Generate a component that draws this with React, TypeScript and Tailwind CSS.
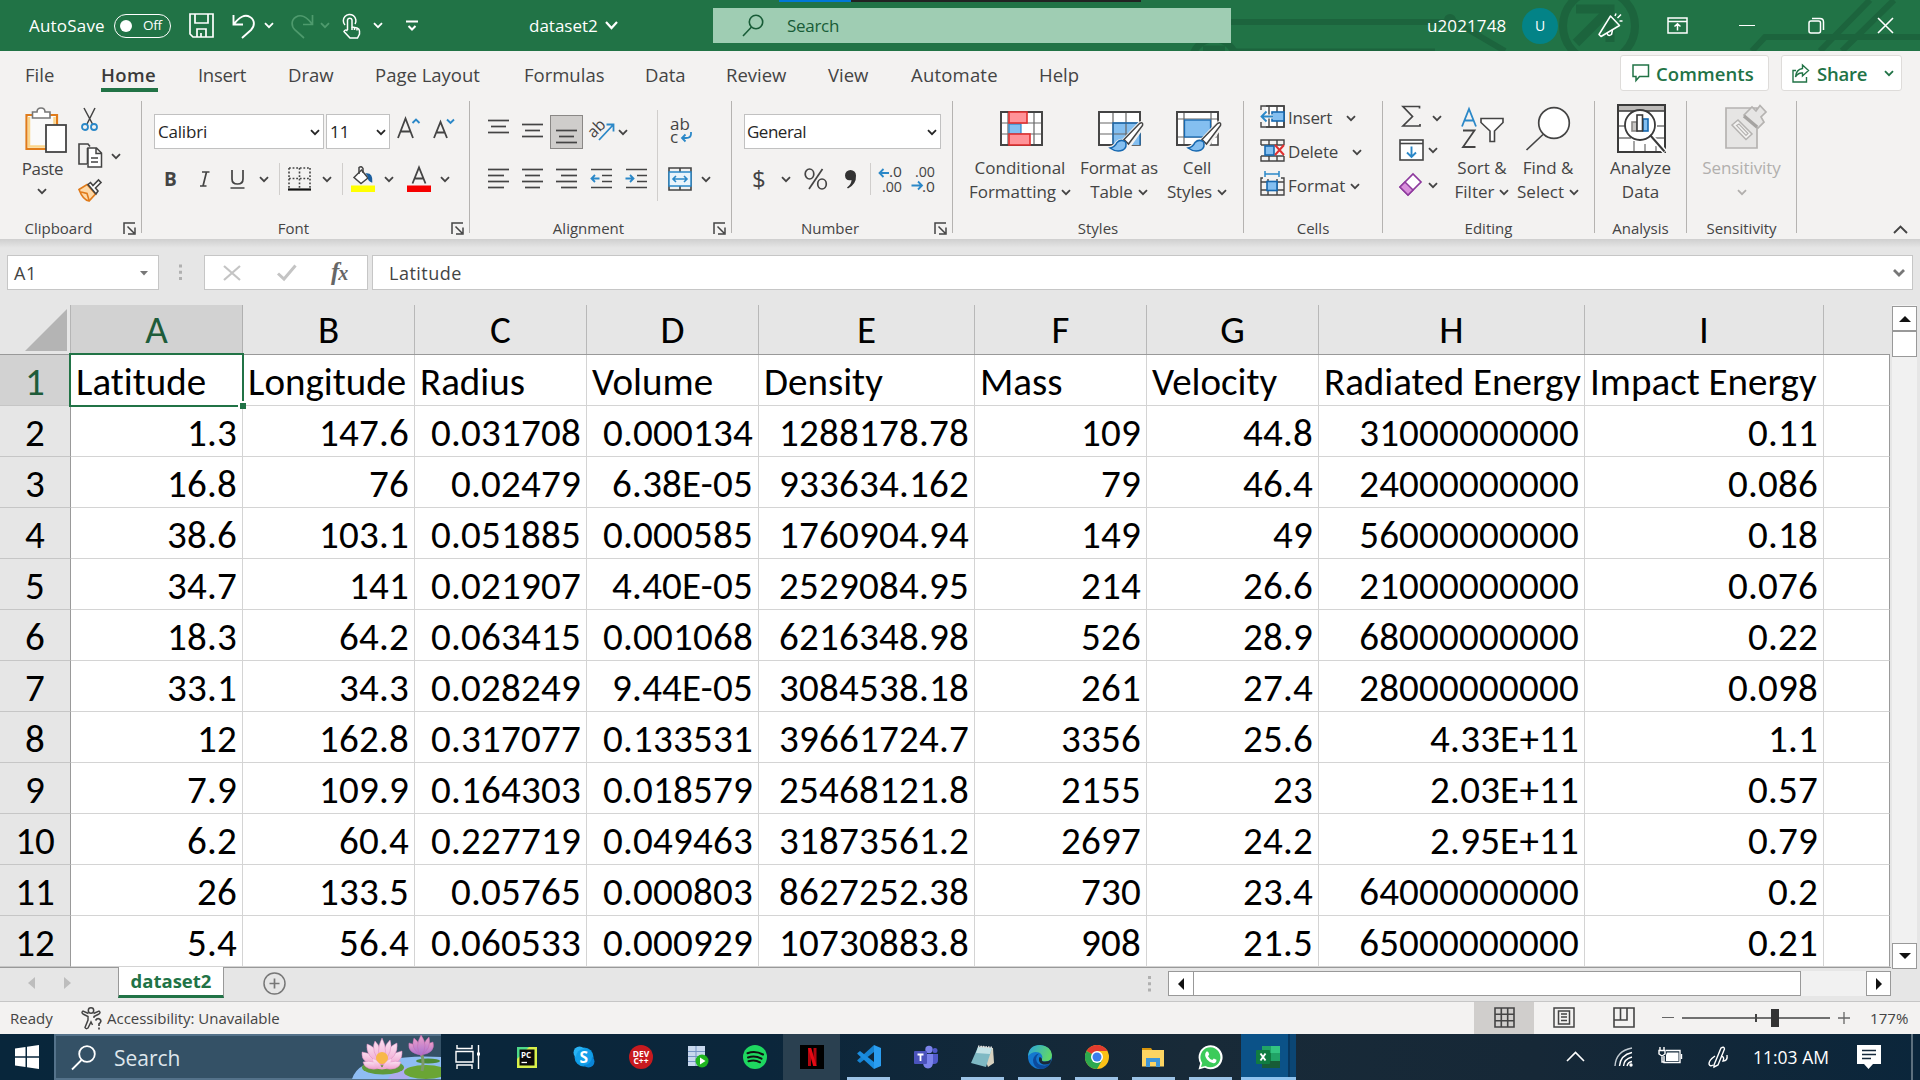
import type { ReactNode } from "react";

function Svg({ w, h, cls = "", children }: { w: number; h: number; cls?: string; children: ReactNode }) {
  return (
    <svg width={w} height={h} viewBox={`0 0 ${w} ${h}`} fill="none" stroke="#444" strokeWidth={1.6} className={"shrink-0 overflow-visible " + cls}>
      {children}
    </svg>
  );
}

function Chev({ cls = "" }: { cls?: string }) {
  return (
    <Svg w={10} h={7} cls={cls}>
      <path d="M1 1.2L5 5.2L9 1.2" stroke="currentColor" strokeWidth={1.8} />
    </Svg>
  );
}

/* ---------- title bar ---------- */

function TitleBar() {
  return (
    <div className="relative flex h-[51px] items-center overflow-hidden bg-[#217346] text-[17px] text-white">
      <svg width="690" height="51" viewBox="0 0 690 51" fill="none" stroke="#1c643d" className="absolute top-0 right-0">
        <path d="M0 22H222" strokeWidth="6" />
        <path d="M0 50H205" strokeWidth="3" />
        <circle cx="220" cy="20" r="6" fill="#1c643d" stroke="none" />
        <path d="M222 20L275 51" strokeWidth="6" />
        <circle cx="369" cy="26" r="36" strokeWidth="8" />
        <path d="M346 9H380V42" strokeWidth="9" />
        <path d="M380 9L346 43" strokeWidth="9" />
        <path d="M640 0L590 51M664 0L612 51" strokeWidth="6" />
        <path d="M690 37H535L522 51" strokeWidth="6" />
      </svg>
      <svg width="60" height="16" viewBox="0 0 60 16" fill="none" stroke="#1c643d" strokeWidth="7" className="absolute top-[35px] left-[1185px]">
        <circle cx="29" cy="26" r="22" />
        <path d="M18 14H40" />
      </svg>
      <div className="absolute top-0 left-[779px] flex h-[2px] w-[362px] bg-[#222]">
        <div className="w-[72px] bg-[#0078d7]" />
      </div>

      <div className="relative flex items-center">
        <span className="ml-[29px] w-[77px] text-[17px] tracking-[0.2px]">AutoSave</span>
        <div className="ml-[8px] flex h-6 w-[57px] items-center rounded-full border-[1.5px] border-white">
          <span className="ml-[5px] h-3 w-3 rounded-full bg-white" />
          <span className="ml-[11px] text-[13.5px] leading-none tracking-[-0.3px]">Off</span>
        </div>
        <Svg w={25} h={25} cls="ml-[18px]">
          <g stroke="#fff" strokeWidth={1.7}>
            <path d="M1 1H24V24H4L1 21Z" />
            <path d="M6 1V10H19V1M8 24V16H17V24M12 20V24" />
          </g>
        </Svg>
        <Svg w={24} h={26} cls="ml-[18px]">
          <path d="M1.5 2V11.5H11M2 11C7 4 13 1 18 4C23 7 23 13 19 17L10 25" stroke="#fff" strokeWidth={1.9} />
        </Svg>
        <Chev cls="ml-[8px]" />
        <Svg w={24} h={26} cls="ml-[16px]">
          <path d="M22.5 2V11.5H13M22 11C17 4 11 1 6 4C1 7 1 13 5 17L14 25" stroke="#4e9a6d" strokeWidth={1.7} />
        </Svg>
        <Chev cls="ml-[6px] text-[#4e9a6d]" />
        <Svg w={19} h={26} cls="ml-[12px]">
          <g stroke="#fff" strokeWidth={1.5}>
            <path d="M3 12A6.3 6.3 0 1 1 13 11" />
            <path d="M5.5 17V7A2.3 2.3 0 0 1 10 7V14L15 15Q17.500 16 17.500 18V21L15.500 25H8L2 18.500Q3 16 5.500 18" />
            <path d="M10 14V17M12.500 14.500V17M15 15.500V17.500" />
          </g>
        </Svg>
        <Chev cls="ml-[12px]" />
        <Svg w={12} h={12} cls="ml-[23px]">
          <path d="M0 1.500H12M2.500 6L6 9.500L9.500 6" stroke="#fff" strokeWidth={2} />
        </Svg>
        <span className="ml-[111px] w-[70px]">dataset2</span>
        <Svg w={13} h={9} cls="ml-[6px]">
          <path d="M1 1L6.500 7L12 1" stroke="#fff" strokeWidth={2.200} />
        </Svg>
      </div>

      <div className="relative ml-[95px] flex h-[35px] w-[518px] items-center bg-[#9fcdb3] text-[#185c37]">
        <Svg w={22} h={23} cls="ml-[29px]">
          <g stroke="#185c37" strokeWidth={1.600}>
            <circle cx="14" cy="8" r="6.700" />
            <path d="M9.500 13L1 22" />
          </g>
        </Svg>
        <span className="ml-[23px] tracking-[-0.3px]">Search</span>
      </div>

      <div className="relative ml-[196px] flex items-center">
        <span className="w-[80px] tracking-[0.1px]">u2021748</span>
        <span className="ml-[15px] flex h-[36px] w-[36px] items-center justify-center rounded-full bg-[#038387] text-[14px]">U</span>
        <Svg w={25} h={25} cls="ml-[40px]">
          <g stroke="#fff" strokeWidth={1.500}>
            <path d="M12.500 3L21.500 12.500L3 23.500L1 21.500Z" strokeLinejoin="round" />
            <path d="M9 20Q10 24 13.500 21.500L14.500 17M17 3L18 0.500M19.500 5L23 1.500M21.500 8H24.500" />
          </g>
        </Svg>
        <Svg w={21} h={17} cls="ml-[44px]">
          <g stroke="#fff" strokeWidth={1.500}>
            <path d="M1 1H20V16H1ZM1 4.500H20M10.500 13.500V7M7.500 9.500L10.500 6.800L13.500 9.500" />
          </g>
        </Svg>
        <div className="ml-[51px] h-[1.5px] w-[16px] bg-white" />
        <Svg w={17} h={17} cls="ml-[53px]">
          <g stroke="#fff" strokeWidth={1.500}>
            <rect x="1" y="4" width="11.500" height="12" rx="2" />
            <path d="M4 1.500H12Q15.500 1.500 15.500 5V13" />
          </g>
        </Svg>
        <Svg w={17} h={17} cls="ml-[52px]">
          <path d="M1 1L16 16M16 1L1 16" stroke="#fff" strokeWidth={1.600} />
        </Svg>
      </div>
    </div>
  );
}

/* ---------- ribbon tabs ---------- */

function Tabs() {
  return (
    <div className="flex h-[50px] items-start text-[18.5px] text-[#444]">
      <nav className="flex h-[48px] items-center whitespace-nowrap">
        <span className="ml-[25px] w-[76px]">File</span>
        <span className="relative flex h-full w-[97px] items-center font-semibold tracking-[0.4px] text-[#3a3a3a]">
          Home
          <i className="absolute top-[37px] left-0 h-[4px] w-[57px] bg-[#217346]" />
        </span>
        <span className="w-[90px] tracking-[-0.3px]">Insert</span>
        <span className="w-[87px]">Draw</span>
        <span className="w-[149px]">Page Layout</span>
        <span className="w-[121px]">Formulas</span>
        <span className="w-[81px]">Data</span>
        <span className="w-[102px]">Review</span>
        <span className="w-[83px]">View</span>
        <span className="w-[128px] tracking-[0.2px]">Automate</span>
        <span className="w-[41px]">Help</span>
      </nav>
      <div className="mt-[4px] mr-[18px] ml-auto flex gap-[12px] font-semibold text-[#217346]">
        <div className="flex h-[36px] w-[149px] items-center rounded-[3px] border border-[#dedcda] bg-white">
          <Svg w={18} h={18} cls="ml-[11px]">
            <path d="M1 1H16.500V12.500H7.500L4 16.500V12.500H1Z" stroke="#217346" strokeWidth={1.500} />
          </Svg>
          <span className="mt-px ml-[6px] tracking-[0.1px]">Comments</span>
        </div>
        <div className="flex h-[36px] w-[121px] items-center rounded-[3px] border border-[#dedcda] bg-white">
          <Svg w={18} h={19} cls="ml-[10px]">
            <g stroke="#217346" strokeWidth={1.400}>
              <path d="M4 6.500H1V18H14.500V13" />
              <path d="M10.500 1L16.500 6.500L10.500 12V9Q6 8.500 3.500 13Q4 5.500 10.500 4.500Z" />
            </g>
          </Svg>
          <span className="mt-px ml-[7px] tracking-[-0.2px]">Share</span>
          <Chev cls="ml-[17px]" />
        </div>
      </div>
    </div>
  );
}

/* ---------- ribbon ---------- */

function Launcher() {
  return (
    <Svg w={14} h={13} cls="mt-[10px] mr-[4px] ml-[6px]">
      <path d="M1 12V1H12M4.500 4.500L11 11M12 5.500V12H5" strokeWidth={1.500} />
    </Svg>
  );
}

function Group({ w, label, launcher = false, children }: { w: string; label: string; launcher?: boolean; children: ReactNode }) {
  return (
    <div className={"flex h-[132px] shrink-0 flex-col border-r border-[#b5b3b1] " + w}>
      <div className="flex h-[111px] shrink-0 items-start whitespace-nowrap">{children}</div>
      <div className="flex h-[27px] shrink-0 items-start">
        <span className="flex-1 pt-[5px] text-center text-[15px] leading-[22px]">{label}</span>
        {launcher && <Launcher />}
      </div>
    </div>
  );
}

function Lines({ rows, cls = "" }: { rows: [number, number][]; cls?: string }) {
  const h = rows.length * 6;
  return (
    <Svg w={23} h={h} cls={cls}>
      {rows.map(([a, b], i) => (
        <path key={i} d={`M${a} ${i * 6 + 1.500}H${b}`} strokeWidth={1.700} />
      ))}
    </Svg>
  );
}

function Clipboard() {
  return (
    <Group w="w-[142px]" label="Clipboard" launcher>
      <div className="ml-[17px] flex w-[50px] flex-col items-center">
        <Svg w={42} h={46} cls="mt-[6px] ml-[8px]">
          <path d="M1.500 8H32V42H1.500Z" fill="#fafafa" stroke="#e07b1a" strokeWidth={2.200} />
          <path d="M4 10V39.500H20" stroke="#fbd58a" strokeWidth={2.500} />
          <path d="M29.500 10V18" stroke="#fbd58a" strokeWidth={2.500} />
          <path d="M7.500 11V5H12Q12 1 16 1Q20 1 20 5H25V11Z" fill="#fff" stroke="#777" />
          <rect x="21" y="18" width="20" height="27" fill="#fff" stroke="#444" strokeWidth={1.800} />
        </Svg>
        <span className="mt-[4px] ml-px text-[17px] leading-[24px] tracking-[-0.4px]">Paste</span>
        <Chev cls="mt-[7px]" />
      </div>
      <div className="ml-[11px] flex w-[24px] flex-col items-center">
        <Svg w={18} h={25} cls="mt-[6px]">
          <path d="M3 1L11.500 17M14 1L6 17" strokeWidth={1.500} />
          <circle cx="4" cy="20" r="3" stroke="#2b88c8" strokeWidth={1.800} />
          <circle cx="13" cy="20" r="3" stroke="#2b88c8" strokeWidth={1.800} />
        </Svg>
        <Svg w={25} h={25} cls="mt-[11px]">
          <path d="M9 21H1V1H10L12 3.500M9.500 21V5" />
          <path d="M10 5H18.500L23.500 10V24H10ZM18 5V10.500H23M13 15H20M13 19H20" fill="#fff" strokeWidth={1.500} />
        </Svg>
        <Svg w={24} h={24} cls="mt-[11px]">
          <path d="M1 10.500L9 5.500L17.500 15L11 22Q5 21 1 10.500Z" fill="#fdd9a8" stroke="#e07b1a" strokeWidth={1.700} />
          <path d="M3 13L9 14.500L11 21" stroke="#e07b1a" />
          <path d="M10 5.500L12.500 3.500L15 6.500L20.500 1L23 3.500L17.500 9L20 12L18 15Z" fill="#fff" />
        </Svg>
      </div>
      <Chev cls="mt-[52px] ml-[9px]" />
    </Group>
  );
}

function FontGroup() {
  return (
    <Group w="w-[328px]" label="Font" launcher>
      <div className="ml-[12px] flex flex-col">
        <div className="mt-[13px] flex h-[35px] text-[17px] text-[#262626]">
          <div className="flex w-[170px] items-center border border-[#c1c1c1] bg-white pt-px pl-[3px] tracking-[-0.2px]">
            Calibri
            <Chev cls="mr-[3px] ml-auto" />
          </div>
          <div className="ml-[2px] flex w-[64px] items-center border border-[#c1c1c1] bg-white pt-px pl-[3px]">
            11
            <Chev cls="mr-[3px] ml-auto" />
          </div>
          <Svg w={23} h={23} cls="mt-[2px] ml-[7px]">
            <path d="M1 22L8.500 2.500L16 22M3.500 15.500H13.500" strokeWidth={1.800} />
            <path d="M15.500 7L19 3.500L22.500 7" stroke="#2b88c8" strokeWidth={1.900} />
          </Svg>
          <Svg w={22} h={23} cls="mt-[2px] ml-[13px]">
            <path d="M1 22L7.500 6L14 22M3.500 16.500H11.500" strokeWidth={1.800} />
            <path d="M14 3.500L17.500 7L21 3.500" stroke="#2b88c8" strokeWidth={1.900} />
          </Svg>
        </div>
        <div className="mt-[14px] flex h-[32px] items-center text-[19px]">
          <b className="ml-[10px] w-[16px] font-bold">B</b>
          <Svg w={11} h={16} cls="ml-[19px]">
            <path d="M3 1H10.500M1 15H7.500M7.500 1L4 15" strokeWidth={1.700} />
          </Svg>
          <Svg w={15} h={19} cls="ml-[20px]">
            <path d="M2 0V9Q2 14 7.500 14Q13 14 13 9V0M0.500 18H14.500" strokeWidth={1.700} />
          </Svg>
          <Chev cls="ml-[14px]" />
          <i className="ml-[10px] h-[32px] w-px bg-[#d0cecc]" />
          <Svg w={23} h={24} cls="ml-[8px]">
            <path d="M1 1H22M1 1V21M22 1V21M11.500 1V21M1 11.500H22" strokeWidth={1.600} strokeDasharray="1.800 1.800" />
            <path d="M0 22.500H23" stroke="#111" strokeWidth={2.200} />
          </Svg>
          <Chev cls="ml-[11px]" />
          <i className="ml-[10px] h-[32px] w-px bg-[#d0cecc]" />
          <Svg w={26} h={26} cls="ml-[7px]">
            <path d="M4 11.500L11.500 4L18 12L11 17.500Z" fill="#fff" strokeWidth={1.500} />
            <path d="M9 8V1.500Q11.500 -0.500 13 2.500V7" strokeWidth={1.500} />
            <path d="M17 8Q22 8 21.500 15.500Q18 14 18.500 10Z" fill="#1b5e9e" stroke="#1b5e9e" />
            <rect x="1" y="19.500" width="24" height="6.500" fill="#ffff00" stroke="none" />
          </Svg>
          <Chev cls="ml-[8px]" />
          <Svg w={24} h={26} cls="ml-[13px]">
            <path d="M5.500 17.500L12 1.500L18.500 17.500M8 12.500H16" strokeWidth={1.800} />
            <rect y="19.500" width="24" height="6.500" fill="#f60000" stroke="none" />
          </Svg>
          <Chev cls="ml-[9px]" />
        </div>
      </div>
    </Group>
  );
}

function IndentIcon({ flip = false }: { flip?: boolean }) {
  return (
    <Svg w={23} h={21} cls="ml-[12px]">
      <path d="M1 1.500H22M12 7.500H22M12 13.500H22M1 19.500H22" strokeWidth={1.700} />
      <path d={flip ? "M0.500 10.500H8.500M5 7L8.500 10.500L5 14" : "M9.500 10.500H1.500M5 7L1.500 10.500L5 14"} stroke="#2b88c8" strokeWidth={1.800} />
    </Svg>
  );
}

function Alignment() {
  return (
    <Group w="w-[262px]" label="Alignment" launcher>
      <div className="ml-[16px] flex w-[171px] flex-col">
        <div className="mt-[14px] flex h-[35px] items-start">
          <Lines rows={[[1, 22], [4, 19], [1, 22]]} cls="mt-[4px] ml-px" />
          <Lines rows={[[1, 22], [4, 19], [1, 22]]} cls="mt-[8px] ml-[11px]" />
          <div className="ml-[6px] flex h-[34px] w-[33px] justify-center border border-[#8a8886] bg-[#cfcdcb]">
            <Lines rows={[[1, 22], [4, 19], [1, 22]]} cls="mt-[13px]" />
          </div>
          <Svg w={26} h={25} cls="ml-[6px] mt-[1px]">
            <text x="0" y="18" fontSize="16" fill="#444" stroke="none" transform="rotate(-45 8 15)">ab</text>
            <path d="M10 24L24 9M17.500 8.500H24.500V15.500" stroke="#2b88c8" strokeWidth={1.800} />
          </Svg>
          <Chev cls="mt-[14px] ml-[3px]" />
        </div>
        <div className="mt-[18px] ml-px flex">
          <Lines rows={[[1, 22], [1, 17], [1, 22], [1, 17]]} />
          <Lines rows={[[1, 22], [4, 19], [1, 22], [4, 19]]} cls="ml-[11px]" />
          <Lines rows={[[1, 22], [6, 22], [1, 22], [6, 22]]} cls="ml-[11px]" />
          <IndentIcon />
          <IndentIcon flip />
        </div>
      </div>
      <i className="mt-[9px] h-[91px] w-px bg-[#d0cecc]" />
      <div className="ml-[10px] flex flex-col">
        <Svg w={24} h={28} cls="mt-[16px] ml-px">
          <text x="1" y="13" fontSize="17" fill="#444" stroke="none">ab</text>
          <text x="1" y="26" fontSize="17" fill="#444" stroke="none">c</text>
          <path d="M22 15V17Q22 21 17 21H13M16.500 17.500L13 21L16.500 24.500" stroke="#2b88c8" strokeWidth={1.800} />
        </Svg>
        <div className="mt-[22px] flex items-center">
          <Svg w={24} h={24}>
            <path d="M1 1H23V23H1ZM12 1V5M12 19V23" />
            <rect x="1" y="5" width="22" height="14" fill="#eaf4fb" stroke="#2b88c8" strokeWidth={1.500} />
            <path d="M5 12H19M8 9L5 12L8 15M16 9L19 12L16 15" stroke="#2b88c8" strokeWidth={1.600} />
          </Svg>
          <Chev cls="ml-[9px]" />
        </div>
      </div>
    </Group>
  );
}

function NumberGroup() {
  return (
    <Group w="w-[221px]" label="Number" launcher>
      <div className="ml-[12px] flex flex-col">
        <div className="mt-[13px] flex h-[35px] w-[197px] items-center border border-[#c1c1c1] bg-white pt-px pl-[2px] text-[17px] tracking-[-0.5px] text-[#262626]">
          General
          <Chev cls="mr-[3px] ml-auto" />
        </div>
        <div className="mt-[14px] flex h-[32px] items-center">
          <span className="ml-[8px] w-[14px] text-[24px]">$</span>
          <Chev cls="ml-[15px]" />
          <Svg w={24} h={22} cls="ml-[13px]">
            <ellipse cx="5.500" cy="6" rx="4.300" ry="5" strokeWidth={1.700} />
            <ellipse cx="18" cy="16" rx="4.300" ry="5" strokeWidth={1.700} />
            <path d="M18.500 1L5 21" strokeWidth={1.700} />
          </Svg>
          <Svg w={13} h={19} cls="ml-[16px]">
            <path d="M1 5.500A5.200 5.200 0 0 1 12 5.500Q12.500 14 4 18.500L3 17.500Q7.500 14 7.500 10Q1.500 11.500 1 5.500Z" fill="#333" stroke="none" />
          </Svg>
          <i className="ml-[13px] h-[32px] w-px bg-[#d0cecc]" />
          <Svg w={25} h={28} cls="ml-[7px]">
            <text x="11" y="12" fontSize="15" fill="#444" stroke="none" textLength="13" lengthAdjust="spacingAndGlyphs">.0</text>
            <text x="4" y="27" fontSize="15" fill="#444" stroke="none" textLength="20" lengthAdjust="spacingAndGlyphs">.00</text>
            <path d="M11 8H1.500M5.500 4L1.500 8L5.500 12" stroke="#2b88c8" strokeWidth={1.800} />
          </Svg>
          <Svg w={25} h={28} cls="ml-[8px]">
            <text x="4" y="12" fontSize="15" fill="#444" stroke="none" textLength="20" lengthAdjust="spacingAndGlyphs">.00</text>
            <text x="11" y="27" fontSize="15" fill="#444" stroke="none" textLength="13" lengthAdjust="spacingAndGlyphs">.0</text>
            <path d="M0.500 20.500H11M7 16.500L11 20.500L7 24.500" stroke="#2b88c8" strokeWidth={1.800} />
          </Svg>
        </div>
      </div>
    </Group>
  );
}

function Brush() {
  return (
    <g>
      <path d="M42 13Q46 11 44 15.500L31 34L26 30Z" fill="#fff" stroke="#f3f2f1" strokeWidth={5} />
      <path d="M12 37Q17 36 19.500 31.500Q24 28 27.500 31.500Q29 36 25 39Q19 42.500 12 37Z" fill="#84bff0" stroke="#f3f2f1" strokeWidth={4} />
      <path d="M26 28.500L41.500 12.500Q45.500 10.500 44.500 14.500L30.500 33Z" fill="#fff" strokeWidth={1.500} />
      <path d="M12 37Q17 36 19 31.500Q23 27.500 27.500 31Q29.500 36 25 39Q18 41.500 12 37Z" fill="#84bff0" stroke="#1668b0" strokeWidth={1.500} />
    </g>
  );
}

function Big({ w, icon, a, b, chev = false, cls = "" }: { w: string; icon: ReactNode; a: string; b?: string; chev?: boolean; cls?: string }) {
  return (
    <div className={`flex flex-col items-center text-[17px] leading-[24px] ${w} ${cls}`}>
      <div className="flex h-[55px] items-start">{icon}</div>
      <span>{a}</span>
      <span className="flex h-[24px] items-center gap-[5px]">
        {b && <span>{b}</span>}
        {chev && <Chev />}
      </span>
    </div>
  );
}

function Styles() {
  return (
    <Group w="w-[291px]" label="Styles">
      <Big
        w="w-[104px]"
        cls="ml-[15px]"
        a="Conditional"
        b="Formatting"
        chev
        icon={
          <Svg w={43} h={35} cls="mt-[10px] ml-[2px]">
            <rect x="1" y="1" width="41" height="33" fill="#fff" />
            <path d="M1 12H42M1 23H42M8 1V34M34 1V34" strokeWidth={1.200} stroke="#666" />
            <path d="M1 1H42V34H1Z" strokeWidth={1.800} />
            <rect x="9" y="13" width="12" height="10" fill="#84bff0" stroke="#2b88c8" strokeWidth={1.200} />
            <rect x="9" y="1" width="18" height="11" fill="#ff9398" stroke="#e03030" />
            <rect x="9" y="23" width="21" height="11" fill="#ff9398" stroke="#e03030" />
          </Svg>
        }
      />
      <Big
        w="w-[80px]"
        cls="ml-[7px] tracking-[-0.15px]"
        a="Format as"
        b="Table"
        chev
        icon={
          <Svg w={46} h={43} cls="mt-[10px] ml-[4px]">
            <rect x="1" y="1" width="41" height="33" fill="#fff" />
            <path d="M15 12H42V34H15Z" fill="#84bff0" stroke="none" />
            <path d="M1 12H42M1 23H42M15 1V34M28 1V34" strokeWidth={1.200} stroke="#666" />
            <path d="M15 34V12H42V34" stroke="#1668b0" strokeWidth={1.300} />
            <path d="M42 13V1H1V34H15" strokeWidth={1.800} />
            <Brush />
          </Svg>
        }
      />
      <Big
        w="w-[64px]"
        cls="ml-[6px] tracking-[-0.1px]"
        a="Cell"
        b="Styles"
        chev
        icon={
          <Svg w={46} h={43} cls="mt-[10px] ml-[4px]">
            <rect x="1" y="1" width="41" height="33" fill="#fff" />
            <path d="M1 8H42M1 26H42M8 1V34M35 1V34" strokeWidth={1.200} stroke="#666" />
            <path d="M42 9V1H1V34H15" strokeWidth={1.800} />
            <rect x="8.500" y="9" width="26" height="17" fill="#84bff0" stroke="#1668b0" strokeWidth={1.300} />
            <Brush />
          </Svg>
        }
      />
    </Group>
  );
}

function Cells() {
  return (
    <Group w="w-[139px]" label="Cells">
      <div className="ml-[16px] flex flex-col text-[17px]">
        <div className="flex h-[34px] items-center">
          <Svg w={25} h={23} cls="mt-[-3px]">
            <path d="M6 1H24V22H6" fill="#fff" />
            <path d="M1 5V1H24V22H1V17M9 1V22M17 1V22" strokeWidth={1.400} />
            <rect x="12" y="7" width="12" height="9" fill="#84bff0" stroke="#1668b0" />
            <path d="M13 11.500H1.500M6.500 6.500L1.500 11.500L6.500 16.500" stroke="#f3f2f1" strokeWidth={4} />
            <path d="M13 11.500H1.500M6.500 6.500L1.500 11.500L6.500 16.500" stroke="#2b88c8" strokeWidth={1.800} />
          </Svg>
          <span className="ml-[3px] w-[46px] tracking-[-0.3px]">Insert</span>
          <Chev cls="ml-[12px]" />
        </div>
        <div className="flex h-[34px] items-center">
          <Svg w={25} h={23} cls="mt-[-3px]">
            <path d="M1 6V1H24V6M1 17V22H24V17M9 1V6M17 1V6M9 17V22M17 17V22M1 6H24M1 17H24" strokeWidth={1.400} />
            <rect x="5" y="7" width="9" height="9" fill="#84bff0" stroke="#1668b0" />
            <path d="M15 6L24 16M24 6L15 16" stroke="#e03030" strokeWidth={2} />
          </Svg>
          <span className="ml-[3px] w-[51px] tracking-[-0.2px]">Delete</span>
          <Chev cls="ml-[13px]" />
        </div>
        <div className="flex h-[34px] items-center">
          <Svg w={25} h={25} cls="mt-[-6px]">
            <path d="M5 3H19M5 0V6M19 0V6" stroke="#2b88c8" strokeWidth={1.500} />
            <path d="M3 7H1V24H24V7H21M1 11H24M1 19H24M8 8V24M17 8V24" strokeWidth={1.400} />
            <rect x="7" y="10.500" width="10" height="9" fill="#84bff0" stroke="#1668b0" />
          </Svg>
          <span className="ml-[3px] w-[58px]">Format</span>
          <Chev cls="ml-[4px]" />
        </div>
      </div>
    </Group>
  );
}

function Editing() {
  return (
    <Group w="w-[212px]" label="Editing">
      <div className="ml-[16px] flex w-[44px] flex-col">
        <div className="mt-[4px] flex items-start">
          <Svg w={20} h={23} cls="ml-[2px]">
            <path d="M18.500 3.500V1.500H2L11.500 11.500L2 21H19V19" strokeWidth={1.700} />
          </Svg>
          <Chev cls="mt-[10px] ml-[11px]" />
        </div>
        <div className="mt-[11px] flex items-center">
          <Svg w={25} h={22}>
            <rect x="1" y="1" width="23" height="20" fill="#fff" />
            <path d="M1 4.500H24" />
            <path d="M12.500 7.500V18M8 13.500L12.500 18L17 13.500" stroke="#2b88c8" strokeWidth={1.900} />
          </Svg>
          <Chev cls="ml-[4px]" />
        </div>
        <div className="mt-[12px] flex items-center">
          <Svg w={24} h={24}>
            <path d="M1 14L14 1L22 9L9 22Z" fill="#fff" stroke="#8e3a9e" strokeWidth={1.700} />
            <path d="M1 14L6 9L14 17L9 22Z" fill="#d98fdc" stroke="#8e3a9e" strokeWidth={1.500} />
          </Svg>
          <Chev cls="ml-[5px]" />
        </div>
      </div>
      <Big
        w="w-[60px]"
        cls="ml-[9px]"
        a="Sort &"
        b="Filter"
        chev
        icon={
          <Svg w={44} h={43} cls="mt-[6px] ml-[2px]">
            <path d="M1 19.500L8 2L15 19.500M3.500 13.500H12.500" stroke="#2b88c8" strokeWidth={1.800} />
            <path d="M2 23.500H13.500L2 40H14.500" strokeWidth={1.800} />
            <path d="M20 11.500H42V15.500L33.500 24V34.500H29V24L20 15.500Z" fill="#fff" />
          </Svg>
        }
      />
      <Big
        w="w-[64px]"
        cls="ml-[4px]"
        a="Find &"
        b="Select"
        chev
        icon={
          <Svg w={45} h={45} cls="mt-[5px]">
            <circle cx="28" cy="17" r="15.300" fill="#fff" strokeWidth={1.700} />
            <path d="M17 28.500L0.500 44" strokeWidth={1.700} />
          </Svg>
        }
      />
    </Group>
  );
}

function Analysis() {
  return (
    <Group w="w-[92px]" label="Analysis">
      <Big
        w="w-full"
        a="Analyze"
        b="Data"
        icon={
          <Svg w={49} h={49} cls="mt-[3px] ml-px">
            <rect x="1" y="1" width="47" height="47" fill="#fff" />
            <rect x="1" y="1" width="47" height="6" fill="#bdbbb9" />
            <path d="M1 22H9M40 22H48M1 34H14M36 34H48M17 37V48M28 40V48M39 42V48" strokeWidth={1.300} stroke="#777" />
            <path d="M1 1H48V48H1Z" strokeWidth={2} stroke="#3a3a3a" />
            <path d="M33 31L48 48" stroke="#fff" strokeWidth={5} />
            <circle cx="23" cy="21" r="15" fill="#fff" stroke="#3a3a3a" strokeWidth={1.800} />
            <path d="M33 31L47.500 47.500" stroke="#3a3a3a" strokeWidth={2} />
            <rect x="15" y="18" width="5" height="9" fill="#c8c6c4" stroke="#8a8886" />
            <rect x="26" y="15" width="5" height="12" fill="#84bff0" stroke="#1668b0" />
            <rect x="20" y="11" width="5.500" height="16" fill="#fff" stroke="#3a3a3a" />
          </Svg>
        }
      />
    </Group>
  );
}

function Sensitivity() {
  return (
    <Group w="w-[110px]" label="Sensitivity">
      <Big
        w="w-full"
        cls="tracking-[-0.1px] text-[#b1afad]"
        a="Sensitivity"
        chev
        icon={
          <Svg w={43} h={47} cls="mt-[3px] ml-[8px]">
            <path d="M2 4H33V44H2Z" fill="#e6e5e4" stroke="#b5b3b1" strokeWidth={1.700} />
            <path d="M8 21L14 16L28 30L22 35.500Z" fill="#f3f2f1" stroke="#b5b3b1" strokeWidth={1.500} />
            <path d="M12.500 21.500L15 20L24 29.500L22 31.500Z" stroke="#b5b3b1" strokeWidth={1.200} />
            <path d="M20 11L28 3L32 7L36 1.500L42 8L37 13L40 18L34 24Z" fill="#e6e5e4" stroke="#b5b3b1" strokeWidth={1.700} />
            <path d="M20 12L33 23" stroke="#a5a3a1" strokeWidth={3.500} />
          </Svg>
        }
      />
    </Group>
  );
}

function Ribbon() {
  return (
    <div className="flex h-[138px] text-[#444]">
      <Clipboard />
      <FontGroup />
      <Alignment />
      <NumberGroup />
      <Styles />
      <Cells />
      <Editing />
      <Analysis />
      <Sensitivity />
      <Svg w={15} h={9} cls="mt-[124px] ml-[96px]">
        <path d="M1 8L7.500 1.500L14 8" strokeWidth={1.900} />
      </Svg>
    </div>
  );
}

/* ---------- formula bar ---------- */

function FormulaBar() {
  return (
    <div className="flex h-[66px] items-start bg-[#e6e6e6] bg-[linear-gradient(#cfcfcf,#e6e6e6_9px)] pt-[16px] text-[18px] text-[#444]">
      <div className="ml-[7px] flex h-[35px] w-[152px] items-center border border-[#c6c6c6] bg-white pt-px pl-[6px] tracking-[0.5px]">
        A1
        <Svg w={8} h={5} cls="mr-[10px] ml-auto">
          <path d="M0 0H8L4 4.500Z" fill="#777" stroke="none" />
        </Svg>
      </div>
      <Svg w={3} h={16} cls="mt-[9px] ml-[20px]">
        <path d="M1.500 0.500V16" strokeWidth={3} stroke="#b0b0b0" strokeDasharray="3 3.200" />
      </Svg>
      <div className="ml-[22px] flex h-[35px] w-[164px] items-center border border-[#c6c6c6] bg-white">
        <Svg w={18} h={16} cls="ml-[18px]">
          <path d="M1 1L17 15M17 1L1 15" stroke="#c4c4c4" strokeWidth={2.200} />
        </Svg>
        <Svg w={20} h={17} cls="ml-[36px]">
          <path d="M1 9.500L7 15L18.500 1.500" stroke="#c4c4c4" strokeWidth={3} />
        </Svg>
        <span className="mt-[-3px] ml-[34px] font-['Liberation_Serif'] text-[25px] leading-none font-bold tracking-[-1px] text-[#666] italic">
          f<span className="text-[20px]">x</span>
        </span>
      </div>
      <div className="ml-[4px] flex h-[35px] w-[1541px] items-center border border-[#c6c6c6] bg-white pt-px pl-[16px]">
        <span className="tracking-[0.5px]">Latitude</span>
        <Svg w={12} h={8} cls="mr-[7px] ml-auto">
          <path d="M1 1L6 6L11 1" stroke="#777" strokeWidth={2.800} />
        </Svg>
      </div>
    </div>
  );
}

/* ---------- sheet ---------- */

const columns = [
  { l: "A", w: "w-[172px]" },
  { l: "B", w: "w-[172px]" },
  { l: "C", w: "w-[172px]" },
  { l: "D", w: "w-[172px]" },
  { l: "E", w: "w-[216px]" },
  { l: "F", w: "w-[172px]" },
  { l: "G", w: "w-[172px]" },
  { l: "H", w: "w-[266px]" },
  { l: "I", w: "w-[239px]" },
  { l: "", w: "w-[66px]" },
];

const rows = [
  ["Latitude", "Longitude", "Radius", "Volume", "Density", "Mass", "Velocity", "Radiated Energy", "Impact Energy", ""],
  ["1.3", "147.6", "0.031708", "0.000134", "1288178.78", "109", "44.8", "31000000000", "0.11", ""],
  ["16.8", "76", "0.02479", "6.38E-05", "933634.162", "79", "46.4", "24000000000", "0.086", ""],
  ["38.6", "103.1", "0.051885", "0.000585", "1760904.94", "149", "49", "56000000000", "0.18", ""],
  ["34.7", "141", "0.021907", "4.40E-05", "2529084.95", "214", "26.6", "21000000000", "0.076", ""],
  ["18.3", "64.2", "0.063415", "0.001068", "6216348.98", "526", "28.9", "68000000000", "0.22", ""],
  ["33.1", "34.3", "0.028249", "9.44E-05", "3084538.18", "261", "27.4", "28000000000", "0.098", ""],
  ["12", "162.8", "0.317077", "0.133531", "39661724.7", "3356", "25.6", "4.33E+11", "1.1", ""],
  ["7.9", "109.9", "0.164303", "0.018579", "25468121.8", "2155", "23", "2.03E+11", "0.57", ""],
  ["6.2", "60.4", "0.227719", "0.049463", "31873561.2", "2697", "24.2", "2.95E+11", "0.79", ""],
  ["26", "133.5", "0.05765", "0.000803", "8627252.38", "730", "23.4", "64000000000", "0.2", ""],
  ["5.4", "56.4", "0.060533", "0.000929", "10730883.8", "908", "21.5", "65000000000", "0.21", ""],
];

function Sheet() {
  return (
    <div className="flex h-[662px] bg-[#e6e6e6]">
      <div className="w-[1890px] font-[Carlito,Lato,sans-serif] text-[39px] leading-none text-black [font-variant-ligatures:none]">
        <div className="flex h-[50px] border-b border-[#999]">
          <div className="flex w-[71px] justify-end border-r border-[#b5b5b5] pt-[4px] pr-[3px]">
            <Svg w={42} h={42}>
              <path d="M42 0V42H0Z" fill="#b4b4b4" stroke="none" />
            </Svg>
          </div>
          {columns.map((c, i) => (
            <div
              key={i}
              className={`flex items-center justify-center ${c.w} ${i === 0 ? "border-r border-[#b0b0b0] bg-[#d2d2d2] text-[#1e5c3a]" : i < 9 ? "border-r border-[#b8b8b8]" : ""}`}
            >
              {c.l}
            </div>
          ))}
        </div>
        {rows.map((r, y) => (
          <div key={y} className="flex h-[51px]">
            <div
              className={`flex w-[71px] items-center justify-center border-r border-b border-r-[#999] border-b-[#c6c6c6] pt-[2px] ${y === 0 ? "bg-[#d2d2d2] text-[#1e5c3a]" : ""}`}
            >
              {y + 1}
            </div>
            {r.map((v, x) => (
              <div
                key={x}
                className={`relative flex items-center border-b border-[#d4d4d4] bg-white pt-[2px] whitespace-nowrap ${columns[x].w} ${x === 9 ? "border-r border-r-[#999]" : "border-r"} ${y === 0 ? "pl-[5px]" : "justify-end pr-[5px] tracking-[0.22px]"}`}
              >
                {v}
                {x === 0 && y === 0 && (
                  <div className="absolute top-[-2px] left-[-2px] z-10 h-[54px] w-[175px] border-2 border-[#217346]">
                    <i className="absolute -right-[4px] -bottom-[4px] h-[8px] w-[8px] border-t-2 border-l-2 border-white bg-[#217346]" />
                  </div>
                )}
              </div>
            ))}
          </div>
        ))}
      </div>
      <div className="ml-[2px] flex w-[25px] flex-col bg-[#f1f1f1]">
        <div className="mt-px flex h-[25px] items-center justify-center border border-[#999] bg-white">
          <Svg w={12} h={6}>
            <path d="M0 6L6 0L12 6Z" fill="#111" stroke="none" />
          </Svg>
        </div>
        <div className="h-[26px] border border-[#999] bg-white" />
        <div className="relative mt-auto -mb-[2px] flex h-[26px] items-center justify-center border border-[#999] bg-white">
          <Svg w={12} h={6}>
            <path d="M0 0L6 6L12 0Z" fill="#111" stroke="none" />
          </Svg>
        </div>
      </div>
    </div>
  );
}

function SheetTabs() {
  return (
    <div className="flex h-[35px] items-start border-b border-b-[#c6c6c6] bg-[#e6e6e6] bg-[linear-gradient(#999,#999)] bg-[length:1891px_1px] bg-no-repeat">
      <Svg w={7} h={12} cls="mt-[10px] ml-[28px]">
        <path d="M7 0V12L0 6Z" fill="#bdbdbd" stroke="none" />
      </Svg>
      <Svg w={7} h={12} cls="mt-[10px] ml-[29px]">
        <path d="M0 0V12L7 6Z" fill="#bdbdbd" stroke="none" />
      </Svg>
      <div className="ml-[47px] flex h-[31px] w-[106px] items-center justify-center border-x border-b-[3px] border-x-[#999] border-b-[#217346] bg-white text-[18.500px] font-bold text-[#217346]">
        dataset2
      </div>
      <Svg w={23} h={23} cls="mt-[5px] ml-[39px]">
        <circle cx="11.500" cy="11.500" r="10.500" stroke="#777" strokeWidth={1.500} />
        <path d="M11.500 6.500V16.500M6.500 11.500H16.500" stroke="#777" strokeWidth={1.700} />
      </Svg>
      <Svg w={3} h={16} cls="mt-[9px] ml-[862px]">
        <path d="M1.500 0V16" strokeWidth={3} stroke="#b0b0b0" strokeDasharray="3 3.200" />
      </Svg>
      <div className="mt-[4px] ml-[17px] flex h-[25px] w-[723px] bg-[#f1f1f1]">
        <div className="flex w-[26px] items-center justify-center border border-[#999] bg-white">
          <Svg w={6} h={12}>
            <path d="M6 0V12L0 6Z" fill="#111" stroke="none" />
          </Svg>
        </div>
        <div className="ml-[-1px] w-[608px] border border-[#999] bg-white" />
        <div className="ml-auto flex w-[25px] items-center justify-center border border-[#999] bg-white">
          <Svg w={6} h={12}>
            <path d="M0 0V12L6 6Z" fill="#111" stroke="none" />
          </Svg>
        </div>
      </div>
    </div>
  );
}

function StatusBar() {
  return (
    <div className="flex h-[32px] items-center bg-[#f3f2f1] text-[15px] text-[#444]">
      <span className="ml-[10px] w-[71px]">Ready</span>
      <Svg w={22} h={23}>
        <g strokeWidth={1.500}>
          <circle cx="10" cy="3.500" r="2.700" />
          <path d="M7.500 6.500L2 4Q0 5.500 2 7L7 9.500V13L4 20.500Q5 22.500 7 21L10 15L11.500 18M12.500 6.500L18 4Q20 5.500 18 7L13 9.500V11" />
          <path d="M14.500 13.500Q16 11 18.500 12Q21.500 14 18 17V19M18 20.500V22.500" strokeWidth={1.700} />
        </g>
      </Svg>
      <span className="ml-[4px] tracking-[-0.02px]">Accessibility: Unavailable</span>
      <div className="ml-auto flex h-full items-center">
        <div className="flex h-full w-[60px] items-center justify-center bg-[#d0cecc]">
          <Svg w={21} h={21} cls="mt-[-2px]">
            <path d="M1 1H20V20H1ZM1 7.300H20M1 13.700H20M7.300 1V20M13.700 1V20" />
          </Svg>
        </div>
        <Svg w={22} h={21} cls="mt-[-2px] ml-[19px]">
          <path d="M1 1H21V20H1ZM5.500 4H16.500V17H5.500ZM8 7H14M8 10H14M8 13.500H14" strokeWidth={1.500} />
        </Svg>
        <Svg w={22} h={21} cls="mt-[-2px] ml-[38px]">
          <path d="M1 1H21V20H1ZM1 13H14V1M7.500 1V13" />
        </Svg>
        <i className="mt-[-1px] ml-[27px] h-[1.500px] w-[12px] bg-[#666]" />
        <Svg w={148} h={18} cls="mt-[-1px] ml-[8px]">
          <path d="M0 9H148" strokeWidth={1.500} />
          <path d="M74 5V13" strokeWidth={2} />
          <rect x="89" y="0" width="8" height="18" fill="#333" stroke="none" />
        </Svg>
        <Svg w={12} h={12} cls="mt-[-1px] ml-[8px]">
          <path d="M0 6H12M6 0V12" strokeWidth={1.300} stroke="#666" />
        </Svg>
        <span className="mr-[11px] ml-[20px] w-[39px] tracking-[0.1px]">177%</span>
      </div>
    </div>
  );
}

/* ---------- taskbar ---------- */

function Flowers() {
  return (
    <svg width="89" height="44" viewBox="0 0 89 44" className="ml-auto">
      <defs>
        <linearGradient id="petal" x1="0" y1="0" x2="0" y2="1">
          <stop offset="0" stopColor="#fbe3f2" />
          <stop offset="1" stopColor="#ee9fce" />
        </linearGradient>
        <linearGradient id="petal2" x1="0" y1="0" x2="0" y2="1">
          <stop offset="0" stopColor="#f0a2c8" />
          <stop offset="1" stopColor="#a56fd0" />
        </linearGradient>
      </defs>
      <path d="M0 44Q6 26 34 25Q60 20 89 22V44Z" fill="#8fbdf3" />
      <path d="M36 44Q46 28 60 34L56 44Z" fill="#b9a4ee" opacity=".7" />
      <ellipse cx="31" cy="32.500" rx="21" ry="7" fill="#5f9a3a" />
      <ellipse cx="76" cy="26" rx="12" ry="2.500" fill="#4c8a35" />
      <ellipse cx="74" cy="37" rx="22" ry="7" fill="#6aa534" />
      <path d="M70 20Q72 28 70 36" stroke="#7d9a6a" strokeWidth="3" fill="none" />
      <g fill="url(#petal)" stroke="#dd86bd" strokeWidth=".5">
        <path d="M30 30Q8 30 10 17Q22 18 30 30ZM30 30Q52 30 50 16Q38 18 30 30Z" />
        <path d="M30 30Q13 22 15 9Q26 12 30 30ZM30 30Q47 22 45 8Q34 12 30 30Z" />
        <path d="M30 30Q18 16 23 6Q30 12 30 30ZM30 30Q42 16 38 5Q30 12 30 30Z" />
        <path d="M30 30Q23 16 30 3Q37 16 30 30Z" />
        <path d="M30 33Q13 37 11 27Q23 24 30 33ZM30 33Q47 37 49 27Q37 24 30 33Z" />
      </g>
      <ellipse cx="30" cy="23" rx="6" ry="6" fill="#f8b84a" />
      <path d="M21 24Q27 26 30 33Q33 26 39 24Q39 34 30 34.500Q21 34 21 24Z" fill="url(#petal)" />
      <g fill="url(#petal2)" stroke="#c268b0" strokeWidth=".5">
        <path d="M69 20Q55 18 57 8Q66 9 69 20ZM69 20Q84 18 81 7Q71 9 69 20Z" />
        <path d="M69 20Q58 14 62 3Q70 9 69 20ZM69 20Q80 14 77 2Q70 8 69 20Z" />
        <path d="M69 21Q62 12 69 0Q77 11 69 21Z" />
      </g>
    </svg>
  );
}

function Slot({ open = false, hover = false, children }: { open?: boolean; hover?: boolean; children: ReactNode }) {
  return (
    <div className={"flex h-full w-[57px] flex-col items-center " + (hover ? "bg-[#2a4050]" : "")}>
      <div className="flex h-[43px] items-center pt-[3px]">{children}</div>
      {open && <i className="h-[3px] w-[43px] bg-[#9cc3e6]" />}
    </div>
  );
}

function Taskbar() {
  return (
    <div className="flex h-[46px] items-start bg-[linear-gradient(90deg,#08263b,#0b263b_40%,#182a38_62%,#162837_80%,#0b263b)] text-white">
      <Svg w={24} h={24} cls="mt-[11px] ml-[15px]">
        <path d="M0 3.500L10.500 2V11.300H0ZM12 1.800L24 0V11.300H12ZM0 12.700H10.500V22L0 20.500ZM12 12.700H24V24L12 22.200Z" fill="#fff" stroke="none" />
      </Svg>
      <div className="ml-[15px] flex h-[46px] w-[387px] items-center border-2 border-r-0 border-[#54728a] bg-[#345166]">
        <Svg w={26} h={25} cls="ml-[15px]">
          <circle cx="16" cy="9" r="7.800" stroke="#fff" strokeWidth={1.800} />
          <path d="M10.500 15L1 24.500" stroke="#fff" strokeWidth={1.800} />
        </Svg>
        <span className="mt-[3px] ml-[17px] text-[21px] text-[#dfe6ec]">Search</span>
        <Flowers />
      </div>
      <div className="flex h-full">
        <Slot>
          <Svg w={26} h={24} cls="mr-[3px]">
            <g stroke="#fff" strokeWidth={1.400}>
              <path d="M2 0V3.500H17V0M2 24V20H17V24M1 6.500H18V17H1ZM23.500 0V24" />
              <rect x="22" y="7.500" width="3" height="3" fill="#fff" stroke="none" />
            </g>
          </Svg>
        </Slot>
        <Slot>
          <svg width="20" height="21" viewBox="0 0 20 21">
            <rect width="20" height="21" fill="#d9f04a" />
            <path d="M0 0H12L0 12Z" fill="#4fd98a" />
            <rect x="2.500" y="2.500" width="15" height="16" fill="#0a0a0a" />
            <text x="4" y="10.500" fontSize="8" fontWeight="700" fill="#fff">PC</text>
            <path d="M4.500 15.500H10" stroke="#fff" strokeWidth="1.300" />
          </svg>
        </Slot>
        <Slot>
          <svg width="22" height="22" viewBox="0 0 22 22">
            <circle cx="11" cy="11" r="9.500" fill="#0f9be6" />
            <circle cx="6.500" cy="6.500" r="6" fill="#28b2f4" />
            <circle cx="15.500" cy="15.500" r="6" fill="#0a84d6" />
            <circle cx="11" cy="11" r="8" fill="#139fe9" />
            <text x="6.500" y="16.500" fontSize="15.500" fontWeight="700" fill="#fff">S</text>
          </svg>
        </Slot>
        <Slot>
          <svg width="24" height="24" viewBox="0 0 24 24">
            <circle cx="12" cy="12" r="12" fill="#c81a1f" />
            <text x="12" y="11.500" fontSize="8.500" fontWeight="700" fill="#fff" textAnchor="middle">DEV</text>
            <text x="12" y="19" fontSize="8.500" fontWeight="700" fill="#fff" textAnchor="middle">C++</text>
          </svg>
        </Slot>
        <Slot>
          <svg width="22" height="22" viewBox="0 0 22 22">
            <rect x="1" y="0" width="17" height="20" fill="#c8d8ee" />
            <path d="M1 5.500H18M1 10.500H18M1 15.500H18M9 0V20" stroke="#7795c4" strokeWidth="1" />
            <circle cx="15" cy="15" r="6.500" fill="#1fb51f" />
            <path d="M13 11.500V18.500L18.500 15Z" fill="#fff" />
          </svg>
        </Slot>
        <Slot>
          <svg width="24" height="24" viewBox="0 0 24 24">
            <circle cx="12" cy="12" r="12" fill="#1ed760" />
            <path d="M4.500 8.200Q12.500 5.500 20 9.500M5 12.500Q12 10.200 18.500 13.700M5.500 16.300Q12 14.500 17 17.300" stroke="#111" strokeWidth="2" fill="none" strokeLinecap="round" />
          </svg>
        </Slot>
        <Slot hover>
          <svg width="24" height="24" viewBox="0 0 24 24">
            <rect width="24" height="24" fill="#000" />
            <path d="M8 3H11L11 21H8ZM13.500 3H16.500V21H13.500Z" fill="#b1060f" />
            <path d="M8 3H11.200L16.500 21H13.200Z" fill="#e50914" />
          </svg>
        </Slot>
        <Slot open>
          <svg width="24" height="24" viewBox="0 0 24 24">
            <path d="M17 0L24 3V21L17 24Z" fill="#2a9df0" />
            <path d="M17 0V7L3 18L0.500 16Q0 15.500 0.500 15Z" fill="#1683d2" />
            <path d="M17 24V17L3 6L0.500 8Q0 8.500 0.500 9Z" fill="#1a8de0" />
          </svg>
        </Slot>
        <Slot>
          <svg width="24" height="24" viewBox="0 0 24 24">
            <circle cx="15" cy="4.500" r="3.700" fill="#7b83eb" />
            <circle cx="21" cy="5.500" r="2.500" fill="#5059c9" />
            <path d="M17 9H24V15Q24 19 20 19H17Z" fill="#5059c9" />
            <path d="M9 9H19V17Q19 23 14 23.500Q9 23 9 17Z" fill="#7b83eb" />
            <rect x="0" y="6" width="13" height="13" rx="1" fill="#4b53bc" />
            <path d="M3.500 9.500H9.500M6.500 9.500V16" stroke="#fff" strokeWidth="1.800" />
          </svg>
        </Slot>
        <Slot open>
          <svg width="24" height="24" viewBox="0 0 24 24">
            <path d="M9 1L22 3L23 18L17 22Z" fill="#d8d2c0" />
            <path d="M7 2L21 3L15 22L0 18Z" fill="#7fb9c4" />
            <path d="M7 2L21 3L19 9L5 8Z" fill="#c4e2e6" />
            <path d="M7 1.500L21 2.500" stroke="#ddd" strokeWidth="2" strokeDasharray="1.500 1" />
          </svg>
        </Slot>
        <Slot open>
          <svg width="24" height="24" viewBox="0 0 24 24">
            <defs>
              <linearGradient id="edgeTop" x1="0" y1="0" x2="1" y2="0.300">
                <stop offset="0" stopColor="#2aa4e0" />
                <stop offset="1" stopColor="#5fd66a" />
              </linearGradient>
            </defs>
            <circle cx="12" cy="12" r="12" fill="#1478cf" />
            <path d="M0 11Q1 0 12 0Q23 1 24 10Q24 16 17 16.500Q13 16.500 14 14Q15.500 10 11 7.500Q5 5.500 0 11Z" fill="url(#edgeTop)" />
            <path d="M8 14Q9 21 17 20.500Q20 20 22.500 18Q19 24 12 24Q5 22 5 15Q6 9.500 11 8.500Q8 11 8 14Z" fill="#0c4a9c" />
            <path d="M14 14Q13 16.500 17 16.600Q21 16.500 23 14.500L22.500 18Q18 20.500 14 19Q9.500 16.500 11.500 12Q13 12 14 14Z" fill="#1a2a38" />
          </svg>
        </Slot>
        <Slot open>
          <svg width="24" height="24" viewBox="0 0 24 24">
            <circle cx="12" cy="12" r="12" fill="#fbc116" />
            <path d="M12 12L1.600 6A12 12 0 0 1 22.400 6H12Z" fill="#e33b2e" />
            <path d="M12 12L1.600 6A12 12 0 0 0 12 24L17.200 15Z" fill="#2da94f" />
            <circle cx="12" cy="12" r="6" fill="#fff" />
            <circle cx="12" cy="12" r="4.500" fill="#3a7ded" />
          </svg>
        </Slot>
        <Slot open>
          <svg width="23" height="20" viewBox="0 0 23 20">
            <path d="M0 1H9L11 4H0Z" fill="#d9960c" />
            <rect x="0" y="3" width="22" height="16.500" fill="#fcd462" />
            <path d="M4 11H18V20H14V15H8V20H4Z" fill="#3f96d8" />
          </svg>
        </Slot>
        <Slot open>
          <svg width="25" height="25" viewBox="0 0 25 25">
            <path d="M0.500 24.500L2.200 18.300A12 12 0 1 1 6.800 22.800Z" fill="#fff" />
            <path d="M3 22L4.200 18A10 10 0 1 1 7.500 21Z" fill="#3ccb5a" />
            <path d="M8.500 6.500Q10 6 10.500 7.500L11.200 9.500L10 11.200Q11.500 14 14.300 15L15.800 13.500L18.500 14.800Q18.500 18 15.500 18.300Q12 18 9 14.500Q5.500 10 8.500 6.500Z" fill="#fff" />
          </svg>
        </Slot>
        <div className="ml-[2px] flex h-full w-[55px] flex-col bg-[linear-gradient(90deg,#0b5288_47px,#07375f_47px,#07375f_49px,#0b4674_49px)]">
          <div className="flex h-[43px] items-center pt-[3px] pl-[15px]">
            <svg width="25" height="24" viewBox="0 0 25 24">
              <rect x="6" y="1" width="9" height="22" fill="#21a366" />
              <rect x="15" y="1" width="9" height="7" fill="#33c481" />
              <rect x="6" y="8" width="9" height="8" fill="#107c41" />
              <rect x="15" y="8" width="9" height="8" fill="#21a366" />
              <rect x="6" y="16" width="18" height="7" fill="#185c37" />
              <rect x="0" y="5" width="14" height="14" rx="1" fill="#107c41" />
              <path d="M4.500 8.500L9.500 15.500M9.500 8.500L4.500 15.500" stroke="#fff" strokeWidth="1.900" />
            </svg>
          </div>
          <i className="h-[3px] bg-[#8fc3ee]" />
        </div>
      </div>
      <div className="ml-auto flex h-full items-center">
        <Svg w={19} h={11} cls="mb-[2px]">
          <path d="M1 10L9.500 1.500L18 10" stroke="#fff" strokeWidth={1.600} />
        </Svg>
        <Svg w={20} h={20} cls="ml-[29px]">
          <g strokeWidth={1.400} stroke="#8d9aa5">
            <path d="M1 19Q2 4 18 1" stroke="#c3ccd3" />
            <path d="M5.500 19Q6.500 8 18 5.500" stroke="#fff" />
            <path d="M9.500 19Q10 12 18 10" stroke="#fff" />
            <path d="M13 19Q14 15 18 14.500" stroke="#fff" />
            <circle cx="17" cy="18" r="1" fill="#fff" stroke="#fff" />
          </g>
        </Svg>
        <Svg w={25} h={17} cls="mb-[3px] ml-[24px]">
          <g stroke="#fff" strokeWidth={1.400}>
            <path d="M8 3.500H22V15.500H6V9" />
            <path d="M9 5.500H20.500V14H8V8Z" fill="#fff" stroke="none" />
            <path d="M23.500 7V12M2 0V3M6 0V3M1 3.500H7V7L4 9L1 7ZM4 9V15H6" />
          </g>
        </Svg>
        <Svg w={21} h={22} cls="ml-[25px]">
          <g stroke="#fff" strokeWidth={1.400}>
            <path d="M6 19L13 2Q16 0 16.500 3L10 19L6 21ZM7 10Q1 14 1 18Q2 21 5 19M13 10Q17 11 15 15Q20 15 19 9" />
          </g>
        </Svg>
        <span className="ml-[24px] w-[77px] text-[17.500px] whitespace-nowrap">11:03 AM</span>
        <Svg w={24} h={25} cls="mt-[1px] ml-[27px]">
          <path d="M0 0H24V19H16L11.500 24L7 19H0Z" fill="#fff" stroke="none" />
          <path d="M5 5.500H19M5 9.500H19M5 13.500H14" stroke="#14283a" strokeWidth={1.400} />
        </Svg>
        <i className="mr-[7px] ml-[30px] h-full w-[2px] bg-[#5d707e]" />
      </div>
    </div>
  );
}

export default function App() {
  return (
    <div className="flex h-[1080px] w-[1920px] flex-col overflow-hidden bg-[#f3f2f1] font-['Open_Sans','Noto_Sans',sans-serif]">
      <TitleBar />
      <Tabs />
      <Ribbon />
      <FormulaBar />
      <Sheet />
      <SheetTabs />
      <StatusBar />
      <Taskbar />
    </div>
  );
}
